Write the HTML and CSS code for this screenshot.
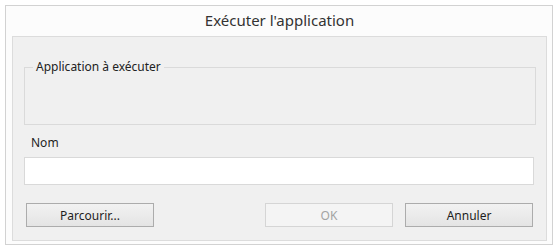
FILE: index.html
```html
<!DOCTYPE html>
<html lang="fr">
<head>
<meta charset="utf-8">
<title>Exécuter l'application</title>
<link rel="stylesheet" href="styles.css">
</head>
<body>
<div class="window">
  <div class="titlebar">Exécuter l'application</div>
  <div class="panel">
    <fieldset class="group">
      <legend>Application à exécuter</legend>
    </fieldset>
    <label class="label" for="nom">Nom</label>
    <input class="input" id="nom" type="text">
    <div class="buttons">
      <button class="btn">Parcourir...</button>
      <div class="right">
        <button class="btn" disabled>OK</button>
        <button class="btn">Annuler</button>
      </div>
    </div>
  </div>
</div>
</body>
</html>
```
FILE: styles.css
```css
* { box-sizing: border-box; }
html, body { margin: 0; padding: 0; background: #ffffff; }
body {
  font-family: "Noto Sans", "Open Sans", sans-serif;
  font-size: 12px;
  color: #1e1e1e;
  padding: 5px 0 0 5px;
}
.window {
  width: 548px;
  height: 240px;
  border: 1px solid #d2d2d2;
  background: #fcfcfc;
  padding: 0 5px 0 6px;
}
.titlebar {
  height: 30px;
  line-height: 28px;
  text-align: center;
  font-size: 15px;
  color: #333333;
}
.panel {
  height: 205px;
  background: #f0f0f0;
  border: 1px solid #dcdcdc;
  padding: 22px 10px 0 11px;
}
.group {
  margin: 0;
  height: 66px;
  border: 1px solid #dadada;
  padding: 0 8px;
}
.group legend {
  padding: 0 3px;
  line-height: 16px;
  color: #222;
}
.label {
  display: block;
  margin-top: 10px;
  line-height: 16px;
  padding-left: 7px;
}
.input {
  display: block;
  margin-top: 6px;
  width: 510px;
  height: 28px;
  border: 1px solid #d9d9d9;
  background: #ffffff;
  outline: none;
}
.buttons {
  display: flex;
  justify-content: space-between;
  margin-top: 18px;
  width: 509px;
  padding-left: 2px;
}
.right { display: flex; gap: 12px; }
.btn {
  width: 128px;
  height: 24px;
  border: 1px solid #acacac;
  background: linear-gradient(#f2f2f2, #e4e4e4);
  font-family: inherit;
  font-size: 12px;
  color: #1e1e1e;
  padding: 0;
}
.btn:disabled {
  border-color: #d5d5d5;
  background: #f4f4f4;
  color: #a3a3a3;
}
```
